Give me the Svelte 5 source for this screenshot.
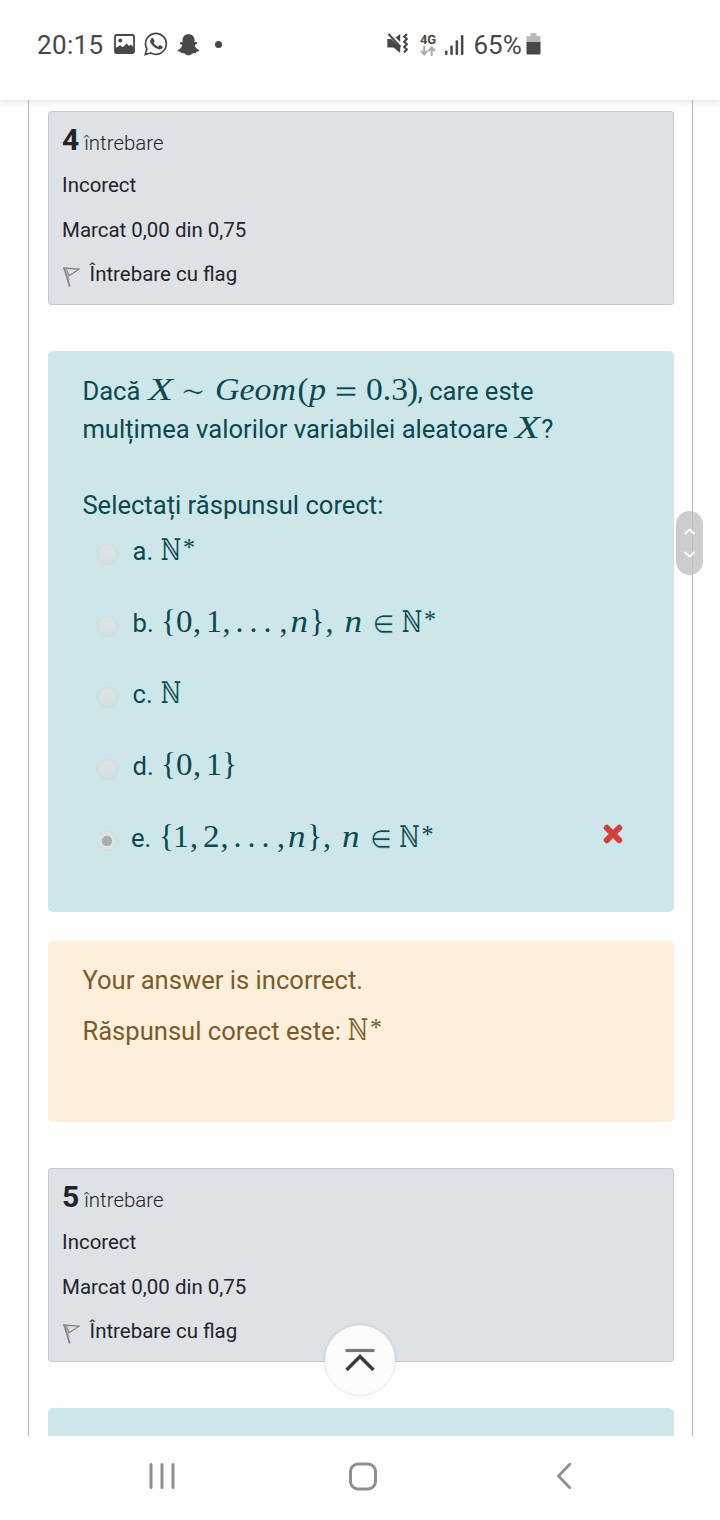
<script>
  const IT = 'it', RM = 'rm', BB = 'bb', SY = 'sy';
  // Math tokens: [text, x, advance width, face, font size, baseline (24 when omitted)]
  const star = (x) => ['*', x, 12, RM, 26, 19.5];
  const nat = (x) => ['ℕ', x, 22, BB, 29.5];
  const distribution = [
    ['X', 1, 25, IT, 31], ['∼', 34, 24, SY, 30], ['Geom', 68, 81, IT, 31], ['(', 150.5, 11, RM, 32],
    ['p', 162, 17, IT, 31], ['=', 187, 24, SY, 31], ['0.3', 219, 42, RM, 31.5], [')', 260, 11, RM, 32]
  ];
  const variable = [['X', 1, 25, IT, 31]];
  const tail = (x) => [
    [',', x, 8, RM, 31], ['n', x + 11, 17.5, IT, 31], ['}', x + 30, 15, RM, 31], [',', x + 46, 8, RM, 31],
    ['n', x + 65, 17.5, IT, 31], ['∈', x + 93, 22, SY, 29], nat(x + 121.5), star(x + 144.5)
  ];
  const dots = (x) => [['.', x, 8, RM, 31], ['.', x + 14, 8, RM, 31], ['.', x + 28, 8, RM, 31]];
  const natStar = [nat(0), star(23)];
  const options = [
    { key: 'a', w: 34, math: natStar },
    { key: 'b', w: 276, math: [['{', 1, 15, RM, 31], ['0', 16, 16.5, RM, 31.5], [',', 33, 8, RM, 31], ['1', 46, 16, RM, 31.5], [',', 62.5, 8, RM, 31], ...dots(75.5), ...tail(119.5)] },
    { key: 'c', w: 22, math: [nat(0)] },
    { key: 'd', w: 76, math: [['{', 1, 15, RM, 31], ['0', 16, 16.5, RM, 31.5], [',', 33, 8, RM, 31], ['1', 46, 16, RM, 31.5], ['}', 62, 15, RM, 31]] },
    { key: 'e', w: 276, checked: true, math: [['{', 1, 15, RM, 31], ['1', 15, 16, RM, 31.5], [',', 32, 8, RM, 31], ['2', 45, 16.5, RM, 31.5], [',', 62.5, 8, RM, 31], ...dots(75.5), ...tail(119)] }
  ];
</script>

{#snippet formula(tokens, w)}
  <svg class="math" width={w} height="24" viewBox="0 0 {w} 24">
    <text y="24">{#each tokens as [t, x, len, face, size, y = 24]}<tspan class={face} {x} {y} font-size={size} textLength={len} lengthAdjust="spacingAndGlyphs">{t}</tspan>{/each}</text>
  </svg>
{/snippet}

{#snippet info(no)}
  <section class="info">
    <h3><b>{no}</b><span>întrebare</span></h3>
    <p>Incorect</p>
    <p>Marcat 0,00 din 0,75</p>
    <p class="flag">
      <svg width="18" height="22" viewBox="0 0 18 22" fill="none" stroke="#858585" stroke-width="1.3">
        <path d="M2.2 2 L7.7 20.5" stroke-width="1.8" /><path d="M1 2 L17 3.2 L7 9.8 L4 2.4" /><path d="M3.8 3 L7 14" stroke="#aaa" />
      </svg>
      <span>Întrebare cu flag</span>
    </p>
  </section>
{/snippet}

<div class="phone">
  <header>
    <span class="clock">20:15</span>
    <svg class="pic" width="21" height="20" viewBox="0 0 21 20"><rect x="1" y="1" width="19" height="18" rx="1.5" fill="none" stroke="#484848" stroke-width="1.8" /><circle cx="6.3" cy="6.5" r="2" fill="#484848" /><path d="M1 14.5 L6 11.3 L8.7 13.2 L12.8 9.5 L15 12 L17 10.6 L20 14 V19 H1Z" fill="#484848" /></svg>
    <svg class="wa" width="24" height="24" viewBox="0 0 24 24"><path d="M1.3 22.5 L2.9 17 A10.4 10.4 0 1 1 7 21 Z" fill="none" stroke="#484848" stroke-width="1.7" /><path d="M7.2 6.4 q1.3-1.2 2.2.1 l1.1 2.4 q.2.7-1 1.8 q1.5 2.9 4.6 4 l1.3-1.5 q.5-.4 1 0 l2.1 1.2 q.6.5-.2 1.8 q-1.7 2-4.5.9 Q8.400 14.700 6.500 10.800 Q5.600 8.200 7.200 6.400Z" fill="#484848" /></svg>
    <svg class="snap" width="23" height="22" viewBox="0 0 23 22"><path d="M11.500 .3 C7.500 .3 5.500 3 5.500 6.500 V8.200 Q3.300 7.500 2.500 9 Q2.500 10 5.300 11 Q4.500 14.500 .6 16.200 Q.8 17.500 3.700 17.900 L4.500 19.200 Q7 18.600 8.500 20.300 Q11.500 22.500 14.500 20.300 Q16 18.600 18.500 19.200 L19.300 17.900 Q22.200 17.500 22.400 16.200 Q18.500 14.500 17.700 11 Q20.500 10 20.500 9 Q19.700 7.500 17.500 8.200 V6.500 C17.500 3 15.500 .3 11.500 .3Z" fill="#484848" /></svg>
    <i class="dot"></i>
    <svg class="mute" width="22" height="22" viewBox="0 0 22 22"><path d="M.3 6 H4 L13.200 14 V20 L6.500 14.500 H.3Z" fill="#484848" /><path d="M8.500 4.500 L13.200 1 V9Z" fill="#484848" /><path d="M1.500 1 L13.500 14" stroke="#484848" stroke-width="2" /><path d="M20 1 l-2.800 2.500 2.600 2.600 -2.600 2.600 2.600 2.600 -2.600 2.600 2.600 2.600 -2.800 3" fill="none" stroke="#484848" stroke-width="2.100" /></svg>
    <span class="net"><b>4G</b>
      <svg width="16" height="10" viewBox="0 0 16 10" fill="none" stroke="#aaa" stroke-width="2"><path d="M4.200 0 V8 M1 4.800 L4.200 8.300 L7.400 4.800 M11.700 10 V2 M8.500 5 L11.700 1.500 L14.900 5" /></svg>
    </span>
    <svg class="bars" width="19" height="20" viewBox="0 0 19 20" fill="#484848"><rect x="0" y="15.500" width="2.500" height="4.500" rx="1" /><rect x="5.300" y="10.500" width="2.500" height="9.500" rx="1" /><rect x="10.600" y="5.200" width="2.500" height="14.800" rx="1" /><rect x="15.900" y="0" width="2.500" height="20" rx="1" /></svg>
    <span class="pct">65%</span>
    <svg class="bat" width="15" height="22" viewBox="0 0 15 22"><path d="M4.500 0 H10.500 V3 H14.500 V10 H.5 V3 H4.500Z" fill="#b9b9b9" /><path d="M.5 9 H14.500 V20.500 Q14.500 21.500 13.500 21.500 H1.500 Q.5 21.500 .5 20.500Z" fill="#484848" /></svg>
  </header>

  <main>
    <div class="column">
      {@render info(4)}
      <section class="question">
        <p>Dacă {@render formula(distribution, 271)}, care este</p>
        <p>mulțimea valorilor variabilei aleatoare {@render formula(variable, 27)}?</p>
        <p class="prompt">Selectați răspunsul corect:</p>
        {#each options as o}
          <div class="option" class:picked={o.checked}>
            <i class="radio"></i>
            <span class="label">{o.key}.</span>
            {@render formula(o.math, o.w)}
            {#if o.checked}
              <svg class="wrong" width="20" height="20" viewBox="0 0 20 20"><path d="M3.800 3.800 L16.200 16.200 M16.200 3.800 L3.800 16.200" stroke="#d43f3a" stroke-width="6" stroke-linecap="round" /></svg>
            {/if}
          </div>
        {/each}
      </section>
      <section class="feedback">
        <p>Your answer is incorrect.</p>
        <p>Răspunsul corect este: {@render formula(natStar, 34)}</p>
      </section>
      {@render info(5)}
      <section class="question next"></section>
    </div>
    <div class="handle">
      <svg width="27" height="64" viewBox="0 0 27 64" fill="none" stroke="#fff" stroke-width="2"><path d="M8.500 23 L13.500 18.500 L18.500 23 M8.500 41 L13.500 45.500 L18.500 41" /></svg>
    </div>
    <div class="top">
      <svg width="32" height="24" viewBox="0 0 32 24" fill="none"><path d="M1.500 2.500 H30.500" stroke="#777" stroke-width="3.200" /><path d="M2.500 22 L16 8.500 L29.500 22" stroke="#3c3c3c" stroke-width="3.500" /></svg>
    </div>
  </main>

  <nav>
    <svg width="26" height="28" viewBox="0 0 26 28" stroke="#8f8f8f" stroke-width="3" stroke-linecap="round"><path d="M2 2.500 V25.500 M13 2.500 V25.500 M24 2.500 V25.500" /></svg>
    <svg class="home" width="28" height="30" viewBox="0 0 28 30"><rect x="1.500" y="2" width="25" height="25" rx="7.500" fill="none" stroke="#8f8f8f" stroke-width="3" /></svg>
    <svg width="16" height="28" viewBox="0 0 16 28" fill="none" stroke="#8f8f8f" stroke-width="2.800" stroke-linecap="round"><path d="M13.800 2.300 L2.500 14 L13.800 25.700" /></svg>
  </nav>
</div>

<style>
  :global(body) { margin: 0; background: #fff; }
  .phone { width: 720px; height: 1520px; overflow: hidden; display: flex; flex-direction: column; background: #fefefe; font-family: Roboto, "Liberation Sans", sans-serif; }
  p, h3 { margin: 0; font-weight: 400; }
  header { height: 100px; flex: none; box-sizing: border-box; padding: 30px 0 0 37px; display: flex; align-items: flex-start; color: #484848; position: relative; z-index: 1; background: #fefefe; box-shadow: 0 1px 6px rgba(0, 0, 0, .14); }
  header > * { flex: none; }
  .clock { width: 77px; font-size: 26px; line-height: 31px; letter-spacing: .35px; }
  .pic { margin-top: 4px; }
  .wa { margin: 2px 0 0 9px; }
  .snap { margin: 4px 0 0 8.500px; }
  .dot { width: 7px; height: 7px; border-radius: 50%; background: #484848; margin: 11px 0 0 15.500px; }
  .mute { margin: 3px 0 0 165px; }
  .net { width: 18px; margin: 3px 0 0 11px; display: flex; flex-direction: column; }
  .net b { font-size: 13px; line-height: 13px; font-weight: 700; letter-spacing: -.2px; }
  .bars { margin: 5px 0 0 7px; }
  .pct { width: 52.500px; margin-left: 9.500px; font-size: 26px; line-height: 31px; white-space: nowrap; }
  .bat { margin-top: 3px; }
  main { height: 1336px; flex: none; overflow: hidden; position: relative; }
  .column { margin: 0 27px 0 28px; height: 1336px; box-sizing: border-box; border: solid #b9b9b9; border-width: 0 1px; padding: 11px 18px 0 18.600px; }
  .info { box-sizing: border-box; height: 194px; border: 1px solid #c6cbd3; border-radius: 3px; background: #dee1e6; padding: 12px 0 0 13.500px; color: #212529; font-size: 20.450px; }
  .info h3 { height: 39px; line-height: 32px; display: flex; align-items: baseline; gap: 5px; }
  .info h3 b { font-size: 30px; font-weight: 700; }
  .info h3 span { font-size: 20.450px; font-weight: 300; }
  .info p { line-height: 44.700px; height: 44.700px; }
  .flag { display: flex; align-items: center; gap: 9.500px; }
  .flag svg { margin-top: 4px; }
  .question, .feedback { box-sizing: border-box; border-radius: 5px; padding-left: 34.800px; font-size: 25.600px; }
  .question { margin-top: 46px; height: 561px; padding-top: 21px; background: #cde6ea; color: #0b4850; }
  .question p { height: 38.200px; line-height: 38.200px; white-space: nowrap; }
  .question .prompt { margin-top: 38.200px; line-height: 37px; }
  .math { display: inline-block; overflow: visible; vertical-align: baseline; fill: currentColor; }
  .it { font-family: "Liberation Serif", serif; font-style: italic; }
  .rm { font-family: "Liberation Serif", serif; }
  .sy, .bb { font-family: "DejaVu Math TeX Gyre", "DejaVu Serif", serif; }
  .sy { stroke: #cde6ea; stroke-width: .6px; }
  .option { height: 71.750px; display: flex; align-items: baseline; line-height: 52.400px; }
  .radio { align-self: flex-start; width: 21px; height: 21px; box-sizing: border-box; border-radius: 50%; margin: 19px 14.700px 0 14.500px; background: linear-gradient(#dbe5e5, #d5e0e2); border: 1px solid #d1dcde; }
  .label { width: 27.200px; }
  .picked .radio { width: 20px; height: 20px; margin: 19px 14px 0 14.500px; background: radial-gradient(circle, #a8adad 0 4.700px, #dbe3e4 5.500px); }
  .wrong { margin-left: 169px; align-self: flex-start; margin-top: 12px; }
  .feedback { margin-top: 28.500px; height: 181.500px; padding-top: 14.700px; background: #fcefdc; color: #7d5a29; }
  .feedback p { height: 50.500px; line-height: 50.500px; }
  .feedback + .info { margin-top: 46px; }
  .next { height: 60px; }
  .handle { position: absolute; left: 676px; top: 411px; width: 27px; height: 64px; border-radius: 14px; background: rgba(194, 194, 194, .82); }
  .top { position: absolute; left: 325px; top: 1225px; width: 70px; height: 70px; border-radius: 50%; background: #fcfcfc; box-shadow: 0 0 3px rgba(0, 0, 0, .18); display: flex; align-items: center; justify-content: center; }
  nav { flex: 1; padding: 26px 148px 0 149px; display: flex; align-items: flex-start; justify-content: space-between; }
  .home { margin-right: 5px; }
</style>
